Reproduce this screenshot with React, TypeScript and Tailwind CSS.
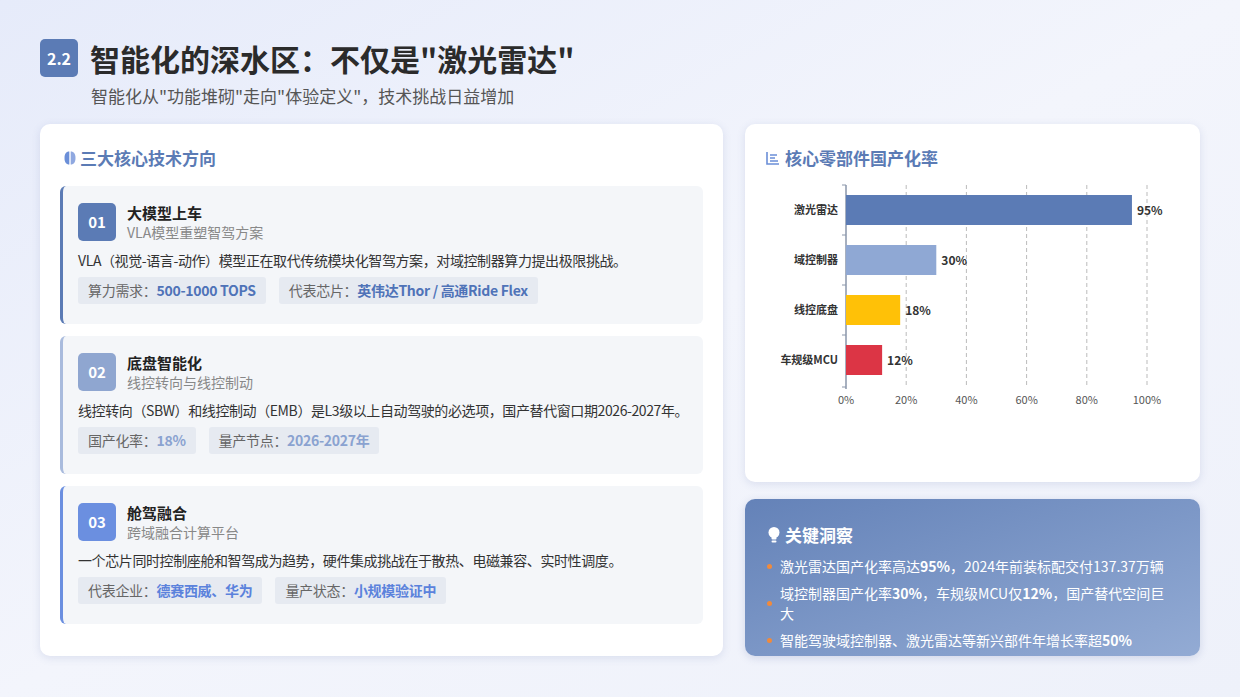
import React from "react";

const F = { fontFamily: '"Noto Sans CJK SC", "Noto Sans", sans-serif' };

const items = [
  { n: "01", t: "大模型上车", s: "VLA模型重塑智驾方案", d: "VLA（视觉-语言-动作）模型正在取代传统模块化智驾方案，对域控制器算力提出极限挑战。", c: "bg-[#5b7bb5]", bl: "border-[#5b7bb5]", tc: "text-[#4f73b8]", tags: [["算力需求：", "500-1000 TOPS"], ["代表芯片：", "英伟达Thor / 高通Ride Flex"]] },
  { n: "02", t: "底盘智能化", s: "线控转向与线控制动", d: "线控转向（SBW）和线控制动（EMB）是L3级以上自动驾驶的必选项，国产替代窗口期2026-2027年。", c: "bg-[#8fa6d0]", bl: "border-[#a9bbdd]", tc: "text-[#8aa2d0]", tags: [["国产化率：", "18%"], ["量产节点：", "2026-2027年"]] },
  { n: "03", t: "舱驾融合", s: "跨域融合计算平台", d: "一个芯片同时控制座舱和智驾成为趋势，硬件集成挑战在于散热、电磁兼容、实时性调度。", c: "bg-[#6b8fe0]", bl: "border-[#6b8fe0]", tc: "text-[#5b82dc]", tags: [["代表企业：", "德赛西威、华为"], ["量产状态：", "小规模验证中"]] },
];

const bars = [
  ["激光雷达", 95, "#5b7bb5"],
  ["域控制器", 30, "#8fa8d4"],
  ["线控底盘", 18, "#ffc107"],
  ["车规级MCU", 12, "#dc3545"],
] as const;

function Chart() {
  const x0 = 81, w = 301;
  return (
    <svg width="420" height="240" className="mt-[6px]" style={F}>
      {[20, 40, 60, 80, 100].map((p) => (
        <line key={p} x1={x0 + (w * p) / 100} x2={x0 + (w * p) / 100} y1={9} y2={211} stroke="#bbb" strokeDasharray="4 3" />
      ))}
      <line x1={x0} x2={x0} y1={9} y2={213} stroke="#8a96aa" strokeWidth="1.5" />
      {[9, 59, 109, 159, 211].map((y) => (
        <line key={y} x1={x0 - 4} x2={x0} y1={y} y2={y} stroke="#8a96aa" />
      ))}
      {bars.map(([l, v, c], i) => {
        const cy = 34 + i * 50;
        return (
          <g key={l}>
            <text x={x0 - 8} y={cy + 4} textAnchor="end" fontSize="11" fontWeight="700" fill="#333">{l}</text>
            <rect x={x0} y={cy - 15} width={(w * v) / 100} height={30} fill={c} />
            <text x={x0 + (w * v) / 100 + 5} y={cy + 5} fontSize="12" fontWeight="700" fill="#333">{v}%</text>
          </g>
        );
      })}
      {[0, 20, 40, 60, 80, 100].map((p) => (
        <text key={p} x={x0 + (w * p) / 100} y={228} textAnchor="middle" fontSize="11" fill="#555">{p}%</text>
      ))}
    </svg>
  );
}

export default function App() {
  return (
    <div className="w-[1240px] h-[697px] overflow-hidden bg-gradient-to-br from-[#e6ebfa] via-[#f3f5fc] to-[#eef1fa] px-[40px] pt-[38px]" style={F}>
      <div className="flex items-center gap-[12px]">
        <div className="w-[38px] h-[38px] rounded-[5px] bg-[#5b7bb5] text-white font-bold text-[16px] flex items-center justify-center">2.2</div>
        <div className="text-[30px] font-bold text-[#2b2b2b] leading-[40px]">智能化的深水区：不仅是"激光雷达"</div>
      </div>
      <div className="ml-[51px] mt-[6px] text-[17px] text-[#555] leading-[24px]">智能化从"功能堆砌"走向"体验定义"，技术挑战日益增加</div>
      <div className="flex gap-[22px] mt-[16px]">
        <div className="w-[683px] h-[532px] bg-white rounded-[10px] shadow-[0_2px_8px_rgba(80,100,160,0.15)] px-[20px] pt-[22px]">
          <div className="flex items-center gap-[2px] text-[17px] font-bold text-[#5b7bb5] leading-[24px] ml-[2px]">
            <svg width="16" height="16" viewBox="0 0 16 16"><path d="M7.3 1.5C4 1.5 2.5 4 2.5 8s1.5 6.5 4.8 6.5z" fill="#6b8fd8"/><path d="M8.7 1.5C12 1.5 13.5 4 13.5 8s-1.5 6.5-4.8 6.5z" fill="#8fa8e0"/></svg>
            三大核心技术方向
          </div>
          <div className="mt-[16px] flex flex-col gap-[12px]">
            {items.map((it) => (
              <div key={it.n} className={`h-[138px] bg-[#f4f6f9] rounded-[6px] border-l-[3px] ${it.bl} pl-[15px] pt-[17px]`}>
                <div className="flex items-center gap-[11px]">
                  <div className={`w-[38px] h-[38px] rounded-[5px] ${it.c} text-white font-bold text-[15px] flex items-center justify-center`}>{it.n}</div>
                  <div>
                    <div className="text-[15px] font-bold text-[#222] leading-[20px]">{it.t}</div>
                    <div className="text-[14px] text-[#888] leading-[18px]">{it.s}</div>
                  </div>
                </div>
                <div className="mt-[8px] text-[14px] text-[#333] leading-[22px] tracking-[-0.4px]">{it.d}</div>
                <div className="mt-[6px] flex gap-[13px]">
                  {it.tags.map(([a, b]) => (
                    <div key={a} className="bg-[#e6eaf1] rounded-[3px] h-[27px] px-[10px] flex items-center text-[14px] tracking-[-0.3px]">
                      <span className="text-[#666]">{a}</span>
                      <span className={`font-bold ${it.tc}`}>{b}</span>
                    </div>
                  ))}
                </div>
              </div>
            ))}
          </div>
        </div>
        <div className="w-[455px] flex flex-col gap-[17px]">
          <div className="h-[358px] bg-white rounded-[10px] shadow-[0_2px_8px_rgba(80,100,160,0.15)] pl-[20px] pt-[22px]">
            <div className="flex items-center gap-[4px] text-[17px] font-bold text-[#5b7bb5] leading-[24px]">
              <svg width="16" height="16" viewBox="0 0 16 16" fill="none" stroke="#6b8fd8" strokeWidth="1.6"><path d="M2 2v12h12M5 5h7M5 8h5M5 11h8"/></svg>
              核心零部件国产化率
            </div>
            <Chart />
          </div>
          <div className="h-[157px] rounded-[10px] bg-gradient-to-br from-[#6482b8] to-[#93abd4] shadow-[0_2px_8px_rgba(80,100,160,0.2)] px-[22px] pt-[24px] text-white">
            <div className="flex items-center gap-[4px] text-[17px] font-bold leading-[24px]">
              <svg width="14" height="18" viewBox="0 0 14 18" fill="white"><circle cx="7" cy="6.5" r="5.5"/><rect x="4.5" y="11" width="5" height="2.5" rx="1"/><rect x="4.5" y="14.5" width="5" height="2" rx="1"/></svg>
              关键洞察
            </div>
            <div className="mt-[9px] flex flex-col gap-[7px] text-[14px] leading-[20px]">
              {[
                <>激光雷达国产化率高达<b>95%</b>，2024年前装标配交付137.37万辆</>,
                <>域控制器国产化率<b>30%</b>，车规级MCU仅<b>12%</b>，国产替代空间巨大</>,
                <>智能驾驶域控制器、激光雷达等新兴部件年增长率超<b>50%</b></>,
              ].map((t, i) => (
                <div key={i} className="flex items-center gap-[8px]">
                  <span className="w-[5px] h-[5px] rounded-full bg-[#f08a3c]" />
                  <span>{t}</span>
                </div>
              ))}
            </div>
          </div>
        </div>
      </div>
    </div>
  );
}
